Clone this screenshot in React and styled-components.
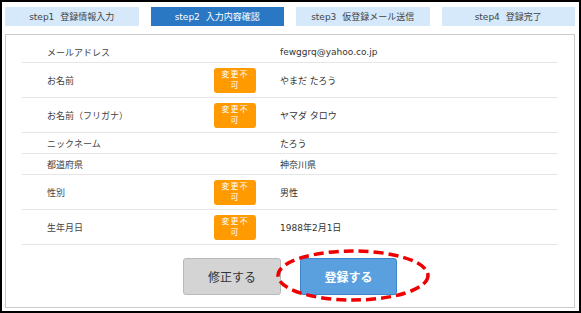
import React from 'react';
import styled, { createGlobalStyle } from 'styled-components';

const GlobalStyle = createGlobalStyle`
  html, body {
    margin: 0;
    padding: 0;
    background: #fff;
  }
  body {
    font-family: 'DejaVu Sans', 'Noto Sans CJK JP', sans-serif;
    color: #333;
  }
`;

const Frame = styled.div`
  width: 581px;
  height: 313px;
  box-sizing: border-box;
  border: 2px solid #000;
  padding: 5px 4px 3px 3px;
  display: flex;
  flex-direction: column;
  gap: 8px;
`;

const Steps = styled.ol`
  display: flex;
  gap: 12px;
  margin: 0;
  padding: 0;
  list-style: none;
`;

const Step = styled.li`
  flex: 1;
  height: 19px;
  display: flex;
  align-items: center;
  justify-content: center;
  font-size: 9px;
  background-color: ${props => (props.$active ? '#2a78c3' : '#d5e9fb')};
  color: ${props => (props.$active ? '#fff' : '#444')};
`;

const StepNum = styled.span`
  margin-right: 6px;
`;

const Panel = styled.section`
  flex: 1;
  border: 1px solid #cbcbcb;
  padding: 7px 16px 0;
  display: flex;
  flex-direction: column;
`;

const Row = styled.div`
  display: grid;
  grid-template-columns: 192px 66px 1fr;
  align-items: center;
  height: ${props => (props.$tall ? '34px' : '20px')};
  border-bottom: 1px solid #e6e6e6;
  font-size: 9px;
`;

const Label = styled.div`
  padding-left: 25px;
  color: #444;
`;

const Value = styled.div`
  color: #333;
`;

const Badge = styled.span`
  display: block;
  width: 42px;
  height: 25px;
  box-sizing: border-box;
  padding: 1px 5px;
  border-radius: 3px;
  background-color: #ff9a00;
  color: #fff;
  font-size: 8px;
  line-height: 11px;
  letter-spacing: 1px;
  text-align: center;
`;

const Actions = styled.div`
  display: flex;
  justify-content: center;
  gap: 19px;
  margin-top: 13px;
`;

const Button = styled.button`
  width: ${props => (props.$primary ? '97px' : '98px')};
  height: 37px;
  border-radius: 3px;
  border: 1px solid ${props => (props.$primary ? '#3f86c8' : '#b9b9b9')};
  background-color: ${props => (props.$primary ? '#5a9fde' : '#d4d4d4')};
  color: ${props => (props.$primary ? '#fff' : '#333')};
  font-family: 'Noto Sans CJK JP', sans-serif;
  font-size: 12px;
  font-weight: ${props => (props.$primary ? 'bold' : 'normal')};
  cursor: pointer;
`;

const Highlight = styled.div`
  position: relative;
`;

const Ring = styled.svg`
  position: absolute;
  left: -26px;
  top: -11px;
  pointer-events: none;
`;

const rows = [
  { label: 'メールアドレス', value: 'fewggrq@yahoo.co.jp' },
  { label: 'お名前', value: 'やまだ たろう', locked: true },
  { label: 'お名前（フリガナ）', value: 'ヤマダ タロウ', locked: true },
  { label: 'ニックネーム', value: 'たろう' },
  { label: '都道府県', value: '神奈川県' },
  { label: '性別', value: '男性', locked: true },
  { label: '生年月日', value: '1988年2月1日', locked: true },
];

const steps = [
  ['step1', '登録情報入力'],
  ['step2', '入力内容確認'],
  ['step3', '仮登録メール送信'],
  ['step4', '登録完了'],
];

export default function App() {
  return (
    <>
      <GlobalStyle />
      <Frame>
        <Steps>
          {steps.map(([num, name], i) => (
            <Step key={num} $active={i === 1}>
              <StepNum>{num}</StepNum>
              {name}
            </Step>
          ))}
        </Steps>

        <Panel>
          {rows.map(row => (
            <Row key={row.label} $tall={row.locked}>
              <Label>{row.label}</Label>
              <div>{row.locked && <Badge>変更不可</Badge>}</div>
              <Value>{row.value}</Value>
            </Row>
          ))}

          <Actions>
            <Button>修正する</Button>
            <Highlight>
              <Button $primary>登録する</Button>
              <Ring width="158" height="57" viewBox="0 0 158 57">
                <ellipse
                  cx="79"
                  cy="28.5"
                  rx="75"
                  ry="24.5"
                  fill="none"
                  stroke="#ee0000"
                  strokeWidth="3.5"
                  strokeDasharray="10 5"
                />
              </Ring>
            </Highlight>
          </Actions>
        </Panel>
      </Frame>
    </>
  );
}
